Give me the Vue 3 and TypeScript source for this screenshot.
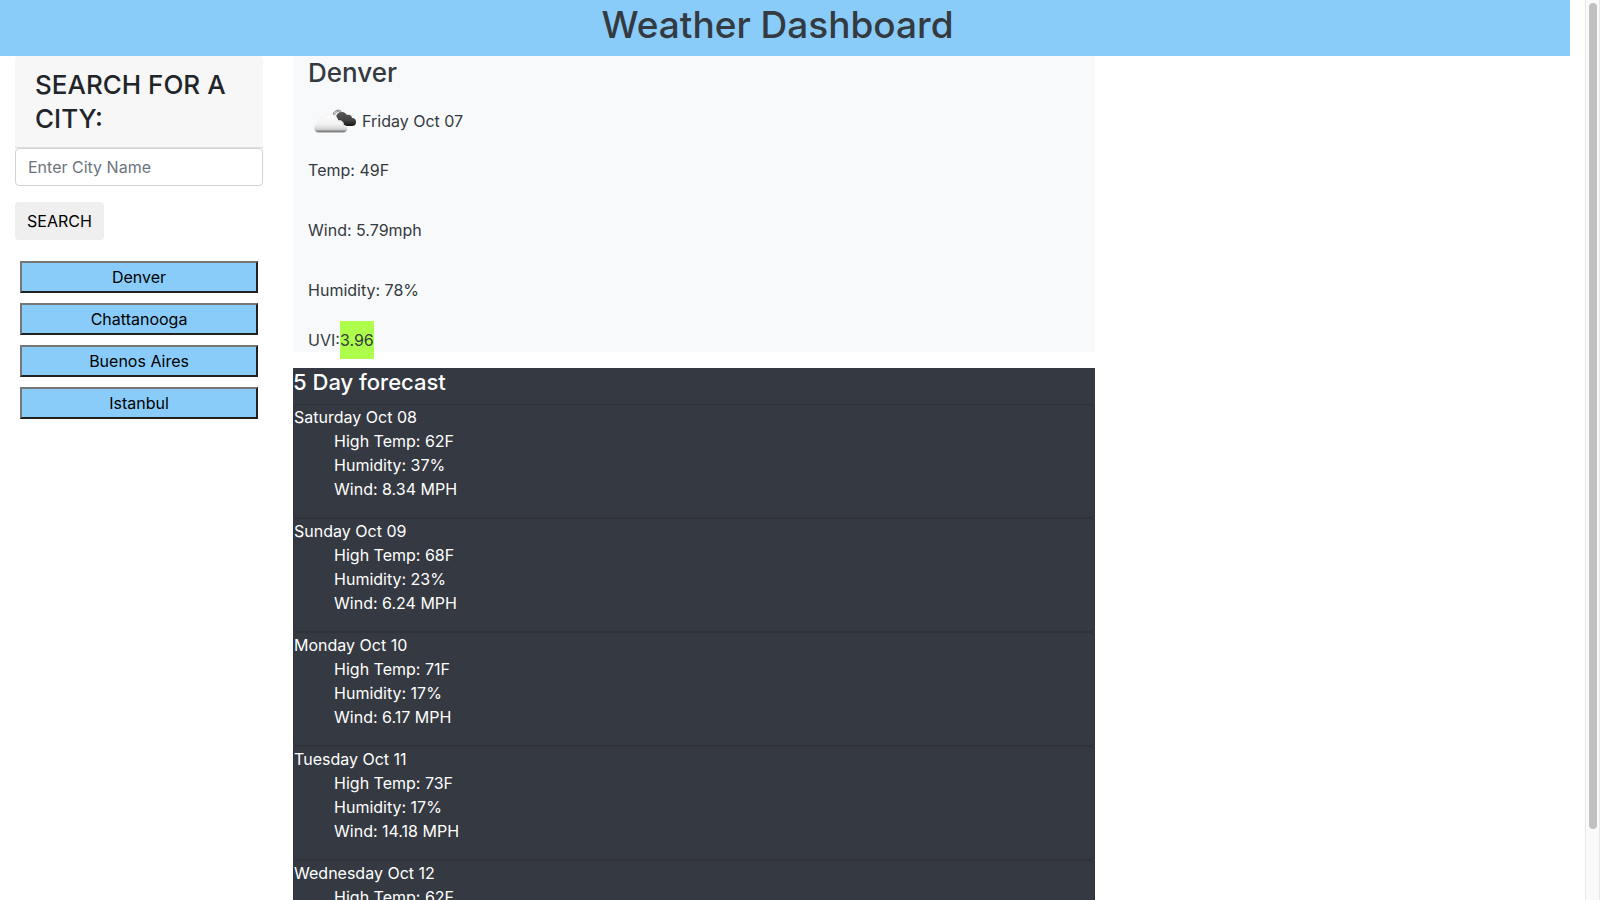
<script setup lang="ts">
import { ref } from 'vue'

interface Day {
  date: string
  temp: number
  humidity: number
  wind: string
}

const query = ref('')
const city = ref('Denver')
const cities: string[] = ['Denver', 'Chattanooga', 'Buenos Aires', 'Istanbul']

const days: Day[] = [
  { date: 'Saturday Oct 08', temp: 62, humidity: 37, wind: '8.34' },
  { date: 'Sunday Oct 09', temp: 68, humidity: 23, wind: '6.24' },
  { date: 'Monday Oct 10', temp: 71, humidity: 17, wind: '6.17' },
  { date: 'Tuesday Oct 11', temp: 73, humidity: 17, wind: '14.18' },
  { date: 'Wednesday Oct 12', temp: 62, humidity: 37, wind: '8.34' },
]

function search(): void {
  const name = query.value.trim()
  if (name) city.value = name
}
</script>

<template>
  <div class="shell">
    <div class="page">
      <header class="banner">
        <h1>Weather Dashboard</h1>
      </header>
      <div class="columns">
        <aside class="sidebar">
          <form @submit.prevent="search">
            <h3 class="card-header"><label for="city">SEARCH FOR A CITY:</label></h3>
            <input id="city" v-model="query" type="text" placeholder="Enter City Name" />
            <button class="search" type="submit">SEARCH</button>
          </form>
          <div class="history">
            <button v-for="name in cities" :key="name" type="button" @click="city = name">{{ name }}</button>
          </div>
        </aside>
        <main class="content">
          <section class="current">
            <h2>{{ city }}</h2>
            <p class="today">
              <svg class="icon" viewBox="-1 0 50 50" aria-hidden="true">
                <defs>
                  <linearGradient id="light" x1="0" y1="0" x2="0" y2="1">
                    <stop offset="0" stop-color="#ffffff" />
                    <stop offset="0.55" stop-color="#f1f1f1" />
                    <stop offset="0.82" stop-color="#d2d2d2" />
                    <stop offset="0.93" stop-color="#858585" />
                    <stop offset="1" stop-color="#707070" />
                  </linearGradient>
                  <linearGradient id="dark" x1="0" y1="0" x2="0" y2="1">
                    <stop offset="0" stop-color="#5a5a5a" />
                    <stop offset="0.6" stop-color="#424242" />
                    <stop offset="1" stop-color="#161616" />
                  </linearGradient>
                </defs>
                <path d="M24 20c0-6 7-8 9-3M25.500 20c0-4 4-6 6-3" fill="none" stroke="#666" stroke-width="0.900" />
                <path d="M28 27c-2-1-2-3 0-4-2-4 1-7 5-7 3 0 4 2 5 3 2-1 5 0 5 3 3 0 4 2 4 4 0 3-2 4-4 4H33c-2 0-4-1-5-3z" fill="url(#dark)" />
                <path d="M10 36c-6 0-6-8-1-9 0-5 4-7 7-6 3-5 12-3 13 4 3-1 6 1 5 4 6 1 5 7 0 7z" fill="#f8f9fa" stroke="#f8f9fa" stroke-width="1" />
                <path d="M10 36.500c-6 0-6-7.500-1-9 0-5 4-7 7-6 3-5 12-3 13 4 3-1 6 1 5 4 6 1 5 7 0 7z" fill="url(#light)" stroke="#dedede" stroke-width="0.300" />
              </svg>
              <span>Friday Oct 07</span>
            </p>
            <p>Temp: 49F</p>
            <p>Wind: 5.79mph</p>
            <p>Humidity: 78%</p>
            <p class="uvi">UVI:<span>3.96</span></p>
          </section>
          <section class="forecast">
            <h4>5 Day forecast</h4>
            <article v-for="day in days" :key="day.date" class="day">
              <div>{{ day.date }}</div>
              <ul>
                <li>High Temp: {{ day.temp }}F</li>
                <li>Humidity: {{ day.humidity }}%</li>
                <li>Wind: {{ day.wind }} MPH</li>
              </ul>
            </article>
          </section>
        </main>
      </div>
    </div>
    <div class="scroll-track" aria-hidden="true"><div class="scroll-thumb"></div></div>
  </div>
</template>

<style>
body {
  margin: 0;
  background: #fff;
}
</style>

<style scoped>
* {
  box-sizing: border-box;
}
.shell {
  display: flex;
  height: 100vh;
  overflow: hidden;
  color: #212529;
  font-family: Inter, "Liberation Sans", sans-serif;
  font-size: 16px;
  line-height: 24px;
}
.page {
  flex: 1;
  min-width: 0;
}
h1, h2, h3, h4, p, ul {
  margin: 0;
  font-weight: 500;
}
p, ul {
  font-weight: 400;
}
.banner {
  margin-right: 15px;
  padding: 1px 15px 7px 0;
  background: #89ccfa;
  color: #343a40;
  text-align: center;
}
h1 {
  font-size: 37px;
  line-height: 48px;
}
.columns {
  display: flex;
  gap: 30px;
  padding-left: 15px;
}
.sidebar {
  flex: 0 0 15.8%;
}
.card-header {
  padding: 12px 20px 11px;
  border-bottom: 1px solid #dfdfdf;
  border-radius: 4px 4px 0 0;
  background: #f7f7f7;
  font-size: 26px;
  line-height: 34px;
}
.card-header label {
  display: block;
}
input {
  display: block;
  width: 100%;
  height: 38px;
  padding: 6px 12px;
  border: 1px solid #ced4da;
  border-radius: 4px;
  background: #fff;
  color: #495057;
  font: inherit;
}
input::placeholder {
  color: #6c757d;
  opacity: 1;
}
.search {
  height: 38px;
  margin: 16px 0;
  padding: 0 12px;
  border: 0;
  border-radius: 4px;
  background: #efefef;
  color: #000;
  font: inherit;
}
.history {
  display: flex;
  flex-direction: column;
  gap: 10px;
  padding: 5px;
}
.history button {
  height: 32px;
  padding: 0 6px;
  border: 2px solid;
  border-color: #767676 #212121 #212121 #767676;
  border-radius: 0;
  background: #89ccfa;
  color: #000;
  font: inherit;
}
.content {
  flex: 0 0 51.1%;
}
.current {
  display: flex;
  flex-direction: column;
  gap: 36px;
  margin-bottom: 16px;
  padding-left: 15px;
  background: #f8f9fb;
  color: #343a40;
}
h2 {
  margin-bottom: -30px;
  font-size: 26px;
  line-height: 34px;
}
.today {
  display: flex;
  align-items: center;
  gap: 4px;
  height: 50px;
  margin-bottom: -24px;
}
.icon {
  width: 50px;
  height: 50px;
}
.uvi {
  margin-top: -10px;
}
.uvi span {
  padding: 9px 0;
  background: #aeff4b;
}
.forecast {
  background: #353941;
  color: #fff;
}
h4 {
  padding-bottom: 7px;
  font-size: 22px;
  line-height: 29px;
}
.day {
  padding-bottom: 16px;
  border: 1px solid #2f3239;
  border-radius: 4px;
}
ul {
  padding-left: 40px;
  list-style: none;
}
.scroll-track {
  flex: 0 0 15px;
  padding: 3px 2px 3px 3px;
  border: solid #e8e8e8;
  border-width: 0 1px;
  background: #fafafa;
}
.scroll-thumb {
  height: 92.4%;
  border-radius: 4px;
  background: #c1c1c1;
}
</style>
